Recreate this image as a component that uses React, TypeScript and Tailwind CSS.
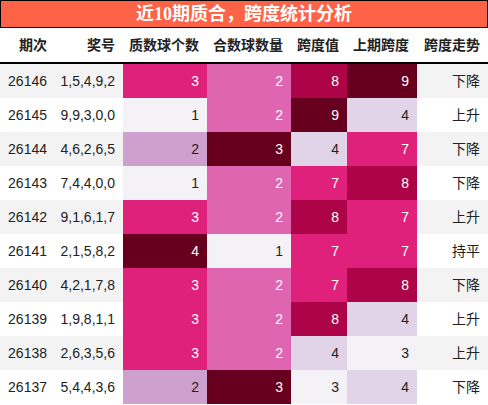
import React from 'react';

type Row = {
    issue: string;
    nums: string;
    prime: number;
    composite: number;
    span: number;
    prevSpan: number;
    trend: string;
};

const rows: Row[] = [
    { issue: '26146', nums: '1,5,4,9,2', prime: 3, composite: 2, span: 8, prevSpan: 9, trend: '下降' },
    { issue: '26145', nums: '9,9,3,0,0', prime: 1, composite: 2, span: 9, prevSpan: 4, trend: '上升' },
    { issue: '26144', nums: '4,6,2,6,5', prime: 2, composite: 3, span: 4, prevSpan: 7, trend: '下降' },
    { issue: '26143', nums: '7,4,4,0,0', prime: 1, composite: 2, span: 7, prevSpan: 8, trend: '下降' },
    { issue: '26142', nums: '9,1,6,1,7', prime: 3, composite: 2, span: 8, prevSpan: 7, trend: '上升' },
    { issue: '26141', nums: '2,1,5,8,2', prime: 4, composite: 1, span: 7, prevSpan: 7, trend: '持平' },
    { issue: '26140', nums: '4,2,1,7,8', prime: 3, composite: 2, span: 7, prevSpan: 8, trend: '下降' },
    { issue: '26139', nums: '1,9,8,1,1', prime: 3, composite: 2, span: 8, prevSpan: 4, trend: '上升' },
    { issue: '26138', nums: '2,6,3,5,6', prime: 3, composite: 2, span: 4, prevSpan: 3, trend: '上升' },
    { issue: '26137', nums: '5,4,4,3,6', prime: 2, composite: 3, span: 3, prevSpan: 4, trend: '下降' },
];

// 每列按自己的最小/最大值取色
const primeCls: Record<number, string> = {
    1: 'bg-[#f4f1f7] text-[#222]',
    2: 'bg-[#cea0ce] text-[#222]',
    3: 'bg-[#e0217b] text-white',
    4: 'bg-[#67001f] text-white',
};
const compositeCls: Record<number, string> = {
    1: 'bg-[#f4f1f7] text-[#222]',
    2: 'bg-[#df65b0] text-white',
    3: 'bg-[#67001f] text-white',
};
const spanCls: Record<number, string> = {
    3: 'bg-[#f4f1f7] text-[#222]',
    4: 'bg-[#e1d3e8] text-[#222]',
    7: 'bg-[#e0217b] text-white',
    8: 'bg-[#ad0447] text-white',
    9: 'bg-[#67001f] text-white',
};

const grid = 'grid grid-cols-[55px_68px_84px_84px_56px_70px_71px]';
const cell = 'flex items-center justify-end pr-[8px]';
const headers = ['期次', '奖号', '质数球个数', '合数球数量', '跨度值', '上期跨度', '跨度走势'];

export default function App() {
    return (
        <div
            className="w-[488px] h-[405px] bg-white overflow-hidden"
            style={{ fontFamily: '"Liberation Sans", "Noto Sans CJK SC", sans-serif' }}
        >
            {/* 标题 */}
            <div
                className="h-[28px] bg-[#ff6347] border border-black flex items-center justify-center text-white font-bold text-[18px]"
                style={{ fontFamily: '"Liberation Serif", "Noto Sans CJK SC", serif' }}
            >
                近10期质合，跨度统计分析
            </div>

            {/* 表头 */}
            <div className={`${grid} h-[36px] border-b-2 border-black text-[14px] font-bold text-[#222]`}>
                {headers.map((h) => (
                    <div key={h} className={cell}>
                        {h}
                    </div>
                ))}
            </div>

            {/* 数据行 */}
            {rows.map((r, i) => (
                <div
                    key={r.issue}
                    className={`${grid} h-[34px] text-[14px] text-[#222] ${i % 2 === 0 ? 'bg-[#f3f3f3]' : 'bg-white'}`}
                >
                    <div className={cell}>{r.issue}</div>
                    <div className={cell}>{r.nums}</div>
                    <div className={`${cell} ${primeCls[r.prime]}`}>{r.prime}</div>
                    <div className={`${cell} ${compositeCls[r.composite]}`}>{r.composite}</div>
                    <div className={`${cell} ${spanCls[r.span]}`}>{r.span}</div>
                    <div className={`${cell} ${spanCls[r.prevSpan]}`}>{r.prevSpan}</div>
                    <div className={cell}>{r.trend}</div>
                </div>
            ))}
        </div>
    );
}
